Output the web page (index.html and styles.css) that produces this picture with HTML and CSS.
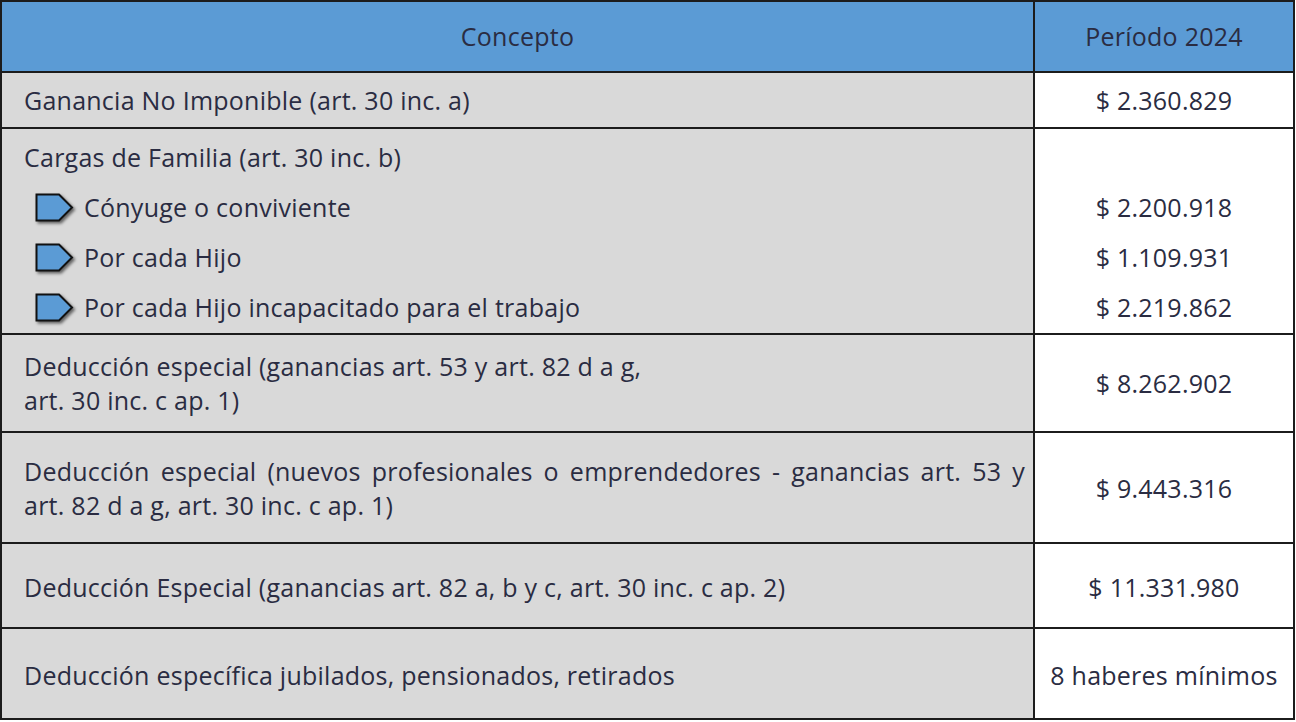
FILE: index.html
```html
<!DOCTYPE html>
<html lang="es">
<head>
<meta charset="utf-8">
<title>Deducciones personales - Período 2024</title>
<link rel="stylesheet" href="styles.css">
</head>
<body>
<div class="sheet">
  <div class="cell head h-row">Concepto</div>
  <div class="cell head val h-row">Período 2024</div>

  <div class="cell label r1">Ganancia No Imponible (art. 30 inc. a)</div>
  <div class="cell val r1">$ 2.360.829</div>

  <div class="cell label r2 stack">
    <div class="line">Cargas de Familia (art. 30 inc. b)</div>
    <div class="line sub"><svg class="bullet" viewBox="0 0 42 30" aria-hidden="true"><polygon points="1.5,1.5 24,1.5 37,14.5 24,27.5 1.5,27.5"/></svg>Cónyuge o conviviente</div>
    <div class="line sub"><svg class="bullet" viewBox="0 0 42 30" aria-hidden="true"><polygon points="1.5,1.5 24,1.5 37,14.5 24,27.5 1.5,27.5"/></svg>Por cada Hijo</div>
    <div class="line sub"><svg class="bullet" viewBox="0 0 42 30" aria-hidden="true"><polygon points="1.5,1.5 24,1.5 37,14.5 24,27.5 1.5,27.5"/></svg>Por cada Hijo incapacitado para el trabajo</div>
  </div>
  <div class="cell val r2 stack">
    <div class="line"></div>
    <div class="line">$ 2.200.918</div>
    <div class="line">$ 1.109.931</div>
    <div class="line">$ 2.219.862</div>
  </div>

  <div class="cell label r3 two">Deducción especial (ganancias art. 53 y art. 82 d a g,<br>art. 30 inc. c ap. 1)</div>
  <div class="cell val r3">$ 8.262.902</div>

  <div class="cell label r4 two">
    <div class="just">Deducción especial (nuevos profesionales o emprendedores - ganancias art. 53 y</div>
    <div>art. 82 d a g, art. 30 inc. c ap. 1)</div>
  </div>
  <div class="cell val r4">$ 9.443.316</div>

  <div class="cell label r5">Deducción Especial (ganancias art. 82 a, b y c, art. 30 inc. c ap. 2)</div>
  <div class="cell val r5">$ 11.331.980</div>

  <div class="cell label r6 last">Deducción específica jubilados, pensionados, retirados</div>
  <div class="cell val r6 last">8 haberes mínimos</div>
</div>
</body>
</html>
```
FILE: styles.css
```css
html, body {
  margin: 0;
  padding: 0;
  background: #ffffff;
}

body {
  font-family: "Open Sans", "Noto Sans", sans-serif;
  font-size: 25px;
  letter-spacing: 0.25px;
  color: #2a2c42;
}

.sheet {
  box-sizing: border-box;
  width: 1295px;
  border: 2px solid #1c1c1c;
  display: grid;
  grid-template-columns: 1033px 1fr;
  grid-template-rows: 71px 56px 206px 98px 111px 85px 89px;
}

.cell {
  box-sizing: border-box;
  border-bottom: 2px solid #1c1c1c;
  display: flex;
  flex-direction: column;
  justify-content: center;
  line-height: 34px;
  white-space: nowrap;
}

.cell.last {
  border-bottom: none;
}

.label,
.head:first-child {
  border-right: 2px solid #1c1c1c;
}

.head {
  background: #5b9bd5;
  align-items: center;
  padding-bottom: 2px;
}

.label {
  background: #d9d9d9;
  padding: 0 8px 0 22px;
}

.val {
  background: #ffffff;
  align-items: center;
  text-align: center;
}

.head.val {
  background: #5b9bd5;
}

.stack {
  justify-content: flex-start;
  padding-top: 3px;
}

.line {
  height: 50px;
  line-height: 50px;
  display: flex;
  align-items: center;
}

.sub {
  padding-left: 11px;
  gap: 7px;
}

.bullet {
  width: 42px;
  height: 30px;
  flex: none;
  margin-top: 1px;
  filter: drop-shadow(2px 2px 1.5px rgba(0, 0, 0, 0.55));
}

.bullet polygon {
  fill: #5b9bd5;
  stroke: #111111;
  stroke-width: 2;
  stroke-linejoin: miter;
}

.r3,
.r4 {
  white-space: normal;
}

.just {
  text-align: justify;
  text-align-last: justify;
}

.r5,
.r6 {
  padding-top: 2px;
}
```
